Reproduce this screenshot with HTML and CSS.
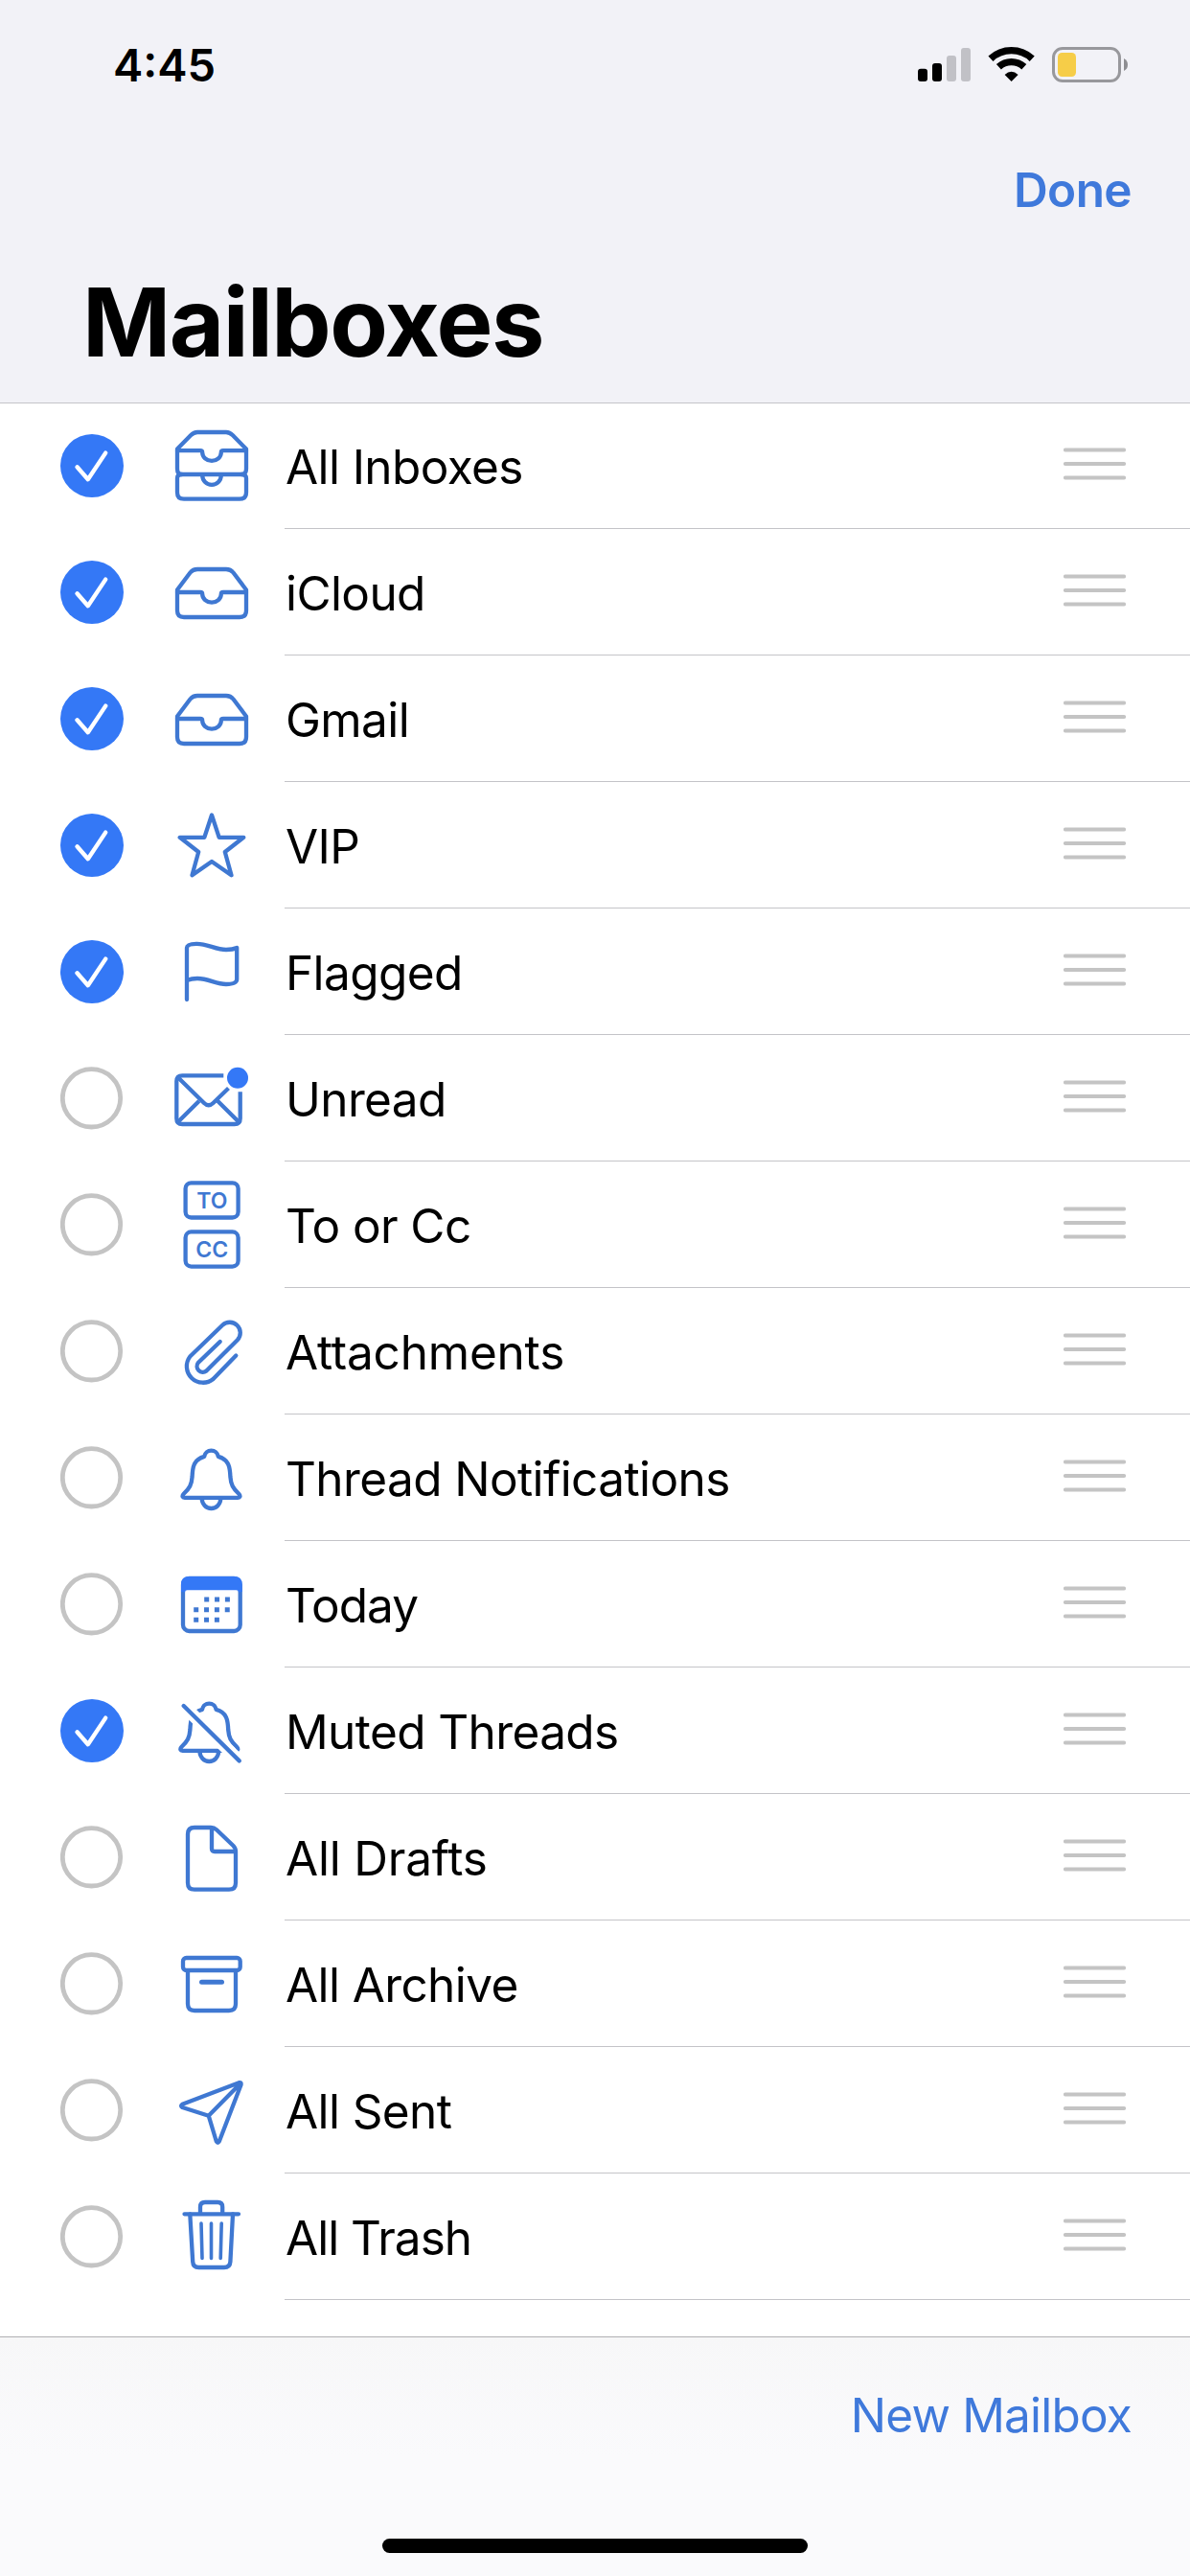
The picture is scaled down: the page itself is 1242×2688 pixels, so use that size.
FILE: index.html
```html
<!DOCTYPE html>
<html lang="en">
<head>
    <meta charset="utf-8">
    <title>Mailboxes</title>
    <link rel="stylesheet" href="styles.css">
</head>
<body>

    <!-- Shared shapes -->
    <svg class="defs" width="0" height="0">
        <symbol id="on" viewBox="0 0 66 66">
            <circle cx="33" cy="33" r="33" fill="#3478f6"/>
            <path d="M17.5 34.3L28.8 47.2L47.2 19.6" fill="none" stroke="#fff" stroke-width="4.4" stroke-linecap="round" stroke-linejoin="round"/>
        </symbol>
        <symbol id="off" viewBox="0 0 66 66">
            <circle cx="32.5" cy="32.8" r="30.2" fill="none" stroke="#c4c4c4" stroke-width="4.8"/>
        </symbol>
        <symbol id="grip" viewBox="0 0 65 34">
            <path d="M2 2.5H63M2 17H63M2 31.5H63" stroke="#c4c4c4" stroke-width="4.2" stroke-linecap="round"/>
        </symbol>
        <symbol id="tray" viewBox="0 0 90 101">
            <path d="M9 48.5L22.5 30.5Q25.3 27 30 27H60Q64.7 27 67.5 30.5L81 48.5V70Q81 77 74 77H16Q9 77 9 70Z"/>
            <path d="M9 51H33Q35.2 51 35.2 53A9.8 8.6 0 0 0 54.8 53Q54.8 51 57 51H81"/>
        </symbol>
        <symbol id="bell" viewBox="0 0 90 101">
            <path d="M17 71.8H72Q76 71.3 73.5 68C67 62 65 58 64.4 50C64 40 63 32 51.8 28.9A7.4 7.4 0 0 0 37.2 28.9C26 32 25 40 24.6 50C24 58 22 62 15.5 68Q13 71.3 17 71.8Z"/>
            <path d="M34.7 72.5A9.8 10.5 0 0 0 54.3 72.5"/>
        </symbol>
    </svg>

    <header class="header">
        <div class="status">
            <span class="time">4:45</span>
            <svg class="indicators" viewBox="0 0 220 40">
                <rect x="0" y="23.7" width="10" height="13.3" rx="3"/>
                <rect x="15" y="18" width="10" height="19" rx="3"/>
                <rect x="30" y="10" width="10" height="27" rx="3" fill="#c1c1c6"/>
                <rect x="45" y="2" width="10" height="35" rx="3" fill="#c1c1c6"/>
                <g fill="none" stroke="#000" stroke-width="7.4">
                    <path d="M76 13.2A31.5 31.5 0 0 1 119.2 13.2"/>
                    <path d="M84.4 21.8A19.5 19.5 0 0 1 110.8 21.8"/>
                </g>
                <path d="M97.6 37L90.6 30Q97.6 23.4 104.6 30Z"/>
                <rect x="141.5" y="2.5" width="69" height="34" rx="9.5" fill="none" stroke="#98989c" stroke-width="3"/>
                <rect x="146" y="7" width="19" height="25" rx="4.5" fill="#f6cd48"/>
                <path d="M215 13Q219 15 219 19.5Q219 24 215 26Z" fill="#8e8e92"/>
            </svg>
        </div>
        <div class="nav">
            <a class="done">Done</a>
        </div>
        <h1>Mailboxes</h1>
    </header>

    <ul class="list">
        <li class="row">
            <svg class="check"><use href="#on"/></svg>
            <svg class="icon" viewBox="0 0 90 101">
                <path d="M9 33.5L23 19.3Q26.3 16 30 16H60Q63.7 16 67 19.3L81 33.5V54Q81 60 76 60H14Q9 60 9 54Z"/>
                <path d="M9 35.2H33Q35.2 35.2 35.2 37.2A9.8 8.6 0 0 0 54.8 37.2Q54.8 35.2 57 35.2H81"/>
                <path d="M14 60Q9 60 9 64V78.7Q9 85.7 16 85.7H74Q81 85.7 81 78.7V64Q81 60 76 60"/>
                <path d="M35.2 61A9.8 9.8 0 0 0 54.8 61"/>
            </svg>
            <div class="body"><span class="label">All Inboxes</span><svg class="grip"><use href="#grip"/></svg></div>
        </li>
        <li class="row">
            <svg class="check"><use href="#on"/></svg>
            <svg class="icon"><use href="#tray"/></svg>
            <div class="body"><span class="label">iCloud</span><svg class="grip"><use href="#grip"/></svg></div>
        </li>
        <li class="row">
            <svg class="check"><use href="#on"/></svg>
            <svg class="icon"><use href="#tray"/></svg>
            <div class="body"><span class="label">Gmail</span><svg class="grip"><use href="#grip"/></svg></div>
        </li>
        <li class="row">
            <svg class="check"><use href="#on"/></svg>
            <svg class="icon" viewBox="0 0 90 101">
                <path d="M45 19.5L52.7 42.8H78.3L58.8 58L65.5 82.3L45 68L24.5 82.3L31.2 58L11.7 42.8H37.3Z"/>
            </svg>
            <div class="body"><span class="label">VIP</span><svg class="grip"><use href="#grip"/></svg></div>
        </li>
        <li class="row">
            <svg class="check"><use href="#on"/></svg>
            <svg class="icon" viewBox="0 0 90 101">
                <path d="M19 80V26Q19 22 29 21.8C40 21.5 49 28 60 28Q67 28 71.2 26V59Q71 64 60 64C49 64 42 58 30 58Q24 58 19 60"/>
            </svg>
            <div class="body"><span class="label">Flagged</span><svg class="grip"><use href="#grip"/></svg></div>
        </li>
        <li class="row">
            <svg class="check"><use href="#off"/></svg>
            <svg class="icon" viewBox="0 0 90 101">
                <path class="butt" d="M57.3 27.3H14.3Q8.3 27.3 8.3 33.3V72Q8.3 78 14.3 78H68.7Q74.7 78 74.7 72V44.3"/>
                <path class="butt" d="M9.5 29L37 56Q41.7 60.5 46.5 56L62.5 40.5M9.5 76L31.7 54M73.5 76L51.3 54"/>
                <circle class="fill" cx="72" cy="29.7" r="11"/>
            </svg>
            <div class="body"><span class="label">Unread</span><svg class="grip"><use href="#grip"/></svg></div>
        </li>
        <li class="row">
            <svg class="check"><use href="#off"/></svg>
            <svg class="icon" viewBox="0 0 90 101">
                <rect x="17.6" y="7.3" width="55" height="36.2" rx="6"/>
                <rect x="17.6" y="58.4" width="55" height="36.2" rx="6"/>
                <text x="45.3" y="34">TO</text>
                <text x="45.3" y="84.8">CC</text>
            </svg>
            <div class="body"><span class="label">To or Cc</span><svg class="grip"><use href="#grip"/></svg></div>
        </li>
        <li class="row">
            <svg class="check"><use href="#off"/></svg>
            <svg class="icon" viewBox="0 0 90 101">
                <path d="M70.3 55.5L46.5 80A17 17 0 0 1 22.3 56.5L56.2 23.8A11 11 0 0 1 71.8 39.3L39.4 71.5A6.1 6.1 0 0 1 30.8 63L53.7 41"/>
            </svg>
            <div class="body"><span class="label loose">Attachments</span><svg class="grip"><use href="#grip"/></svg></div>
        </li>
        <li class="row">
            <svg class="check"><use href="#off"/></svg>
            <svg class="icon"><use href="#bell"/></svg>
            <div class="body"><span class="label">Thread Notifications</span><svg class="grip"><use href="#grip"/></svg></div>
        </li>
        <li class="row">
            <svg class="check"><use href="#off"/></svg>
            <svg class="icon" viewBox="0 0 90 101">
                <rect x="15" y="24" width="59.7" height="55" rx="6.5"/>
                <path class="fill" d="M13 38V30Q13 22 21 22H68.7Q76.7 22 76.7 30V38L73 38.5Q73 36.3 70.5 36.3H19.5Q17 36.3 17 38.5Z"/>
                <path class="butt dots" d="M37.2 46H66M26.2 56.7H66M26.2 67.3H54"/>
            </svg>
            <div class="body"><span class="label tight">Today</span><svg class="grip"><use href="#grip"/></svg></div>
        </li>
        <li class="row">
            <svg class="check"><use href="#on"/></svg>
            <svg class="icon" viewBox="0 0 90 101">
                <use href="#bell" x="-2.2" width="90" height="101"/>
                <path class="gap" d="M12 21.3L78 86.7"/>
                <path d="M15.7 25L73.7 82.4"/>
            </svg>
            <div class="body"><span class="label">Muted Threads</span><svg class="grip"><use href="#grip"/></svg></div>
        </li>
        <li class="row">
            <svg class="check"><use href="#off"/></svg>
            <svg class="icon" viewBox="0 0 90 101">
                <path d="M44 20H27Q20 20 20 27V77.7Q20 84.7 27 84.7H63Q70 84.7 70 77.7V45Q70 41.5 67.5 39L50 22.3Q47.5 20 44 20Z"/>
                <path d="M45 21V42Q45 45 48 45H69"/>
            </svg>
            <div class="body"><span class="label loose">All Drafts</span><svg class="grip"><use href="#grip"/></svg></div>
        </li>
        <li class="row">
            <svg class="check"><use href="#off"/></svg>
            <svg class="icon" viewBox="0 0 90 101">
                <rect x="15" y="24" width="59.7" height="13" rx="3.5"/>
                <path d="M20 38V72Q20 79 27 79H63Q70 79 70 72V38"/>
                <path class="bold" d="M34.5 49.3H55.5"/>
            </svg>
            <div class="body"><span class="label">All Archive</span><svg class="grip"><use href="#grip"/></svg></div>
        </li>
        <li class="row">
            <svg class="check"><use href="#off"/></svg>
            <svg class="icon" viewBox="0 0 90 101">
                <path d="M73.5 22.2L14.3 44.8Q11.8 46.6 14.3 48L41.7 56.7L49.8 83.5Q51.3 86 52.8 83.5L75.6 24.2Q76 21.6 73.5 22.2ZM75 23L41.7 56.7"/>
            </svg>
            <div class="body"><span class="label">All Sent</span><svg class="grip"><use href="#grip"/></svg></div>
        </li>
        <li class="row">
            <svg class="check"><use href="#off"/></svg>
            <svg class="icon" viewBox="0 0 90 101">
                <path d="M16.5 27.3H73M33 27V20Q33 15 38 15H51.2Q56.2 15 56.2 20V27"/>
                <path d="M22.3 27.5L25.2 77Q25.5 83 31.5 83H58Q64 83 64.4 77L67 27.5"/>
                <path class="thin" d="M34 37L35 73.5M44.5 37V73.5M55.2 37L54.2 73.5"/>
            </svg>
            <div class="body"><span class="label tight">All Trash</span><svg class="grip"><use href="#grip"/></svg></div>
        </li>
    </ul>

    <footer class="toolbar">
        <a class="new">New Mailbox</a>
        <div class="home"></div>
    </footer>

</body>
</html>
```
FILE: styles.css
```css
* {
    box-sizing: border-box;
}

body {
    margin: 0;
    width: 1242px;
    height: 2688px;
    display: flex;
    flex-direction: column;
    overflow: hidden;
    background: #fff;
    color: #000;
    font-family: Inter, "Liberation Sans", sans-serif;
    font-size: 49.5px;
}

.defs {
    position: absolute;
}

.header {
    height: 421px;
    background: #f2f2f7;
    border-bottom: 1px solid #c4c4c9;
}

.status {
    display: flex;
    justify-content: space-between;
    align-items: center;
    height: 136px;
    padding: 0 64px 0 118px;
}

.time {
    padding-bottom: 2px;
    font-size: 47px;
    font-weight: 600;
}

.indicators {
    width: 220px;
    height: 40px;
}

.nav {
    display: flex;
    justify-content: flex-end;
    align-items: center;
    height: 124px;
    padding-right: 61px;
}

.done {
    color: #3f79db;
    font-weight: 600;
    letter-spacing: -0.6px;
}

h1 {
    margin: 0;
    padding-left: 86px;
    font-size: 99px;
    font-weight: 700;
    letter-spacing: -1.5px;
    line-height: 152px;
}

.list {
    margin: -1px 0 0;
    padding: 0;
    list-style: none;
    flex: 1;
}

.row {
    display: flex;
    align-items: center;
    height: 132px;
    padding-left: 63px;
}

.check {
    width: 66px;
    height: 66px;
    margin: 0 47px 1px 0;
}

.icon {
    width: 90px;
    height: 101px;
    margin: 0 31px 1px 0;
    fill: none;
    stroke: #3f78d2;
    stroke-width: 4.3;
    stroke-linecap: round;
    stroke-linejoin: round;
}

.icon .butt {
    stroke-linecap: butt;
}

.icon .bold {
    stroke-width: 5;
}

.icon .thin {
    stroke-width: 3.6;
}

.icon .gap {
    stroke: #fff;
    stroke-width: 13;
}

.icon .fill {
    fill: #3478f6;
    stroke: none;
}

.icon .dots {
    stroke-width: 5;
    stroke-dasharray: 5 5.85;
}

.icon text {
    fill: #3f78d2;
    stroke: none;
    font-size: 23px;
    font-weight: 600;
    text-anchor: middle;
}

.body {
    flex: 1;
    display: flex;
    justify-content: space-between;
    align-items: center;
    height: 132px;
    padding-right: 67px;
    border-bottom: 1px solid #c4c4c8;
}

.label {
    padding: 3px 0 0 1px;
    letter-spacing: -0.6px;
}

.label.loose {
    letter-spacing: -0.2px;
}

.label.tight {
    letter-spacing: -1px;
}

.grip {
    width: 65px;
    height: 34px;
    margin-bottom: 3px;
}

.toolbar {
    display: flex;
    flex-direction: column;
    align-items: center;
    height: 250px;
    background: linear-gradient(#f7f7f8, #fafafc 50%);
    border-top: 1px solid #b0b0b2;
}

.new {
    align-self: flex-end;
    padding-right: 61px;
    color: #3f79db;
    letter-spacing: -0.8px;
    line-height: 162px;
}

.home {
    width: 444px;
    height: 15px;
    margin-top: 48px;
    border-radius: 8px;
    background: #000;
}
```
